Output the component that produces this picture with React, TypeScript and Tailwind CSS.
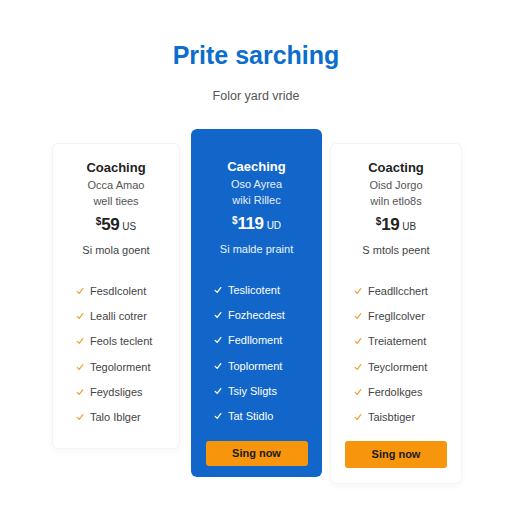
import React from "react";

type Plan = {
  name: string;
  lines: string[];
  price: string;
  unit: string;
  note: string;
  features: string[];
  featured?: boolean;
  button?: string;
};

const plans: Plan[] = [
  {
    name: "Coaching",
    lines: ["Occa Amao", "well tiees"],
    price: "59",
    unit: "US",
    note: "Si mola goent",
    features: ["Fesdlcolent", "Lealli cotrer", "Feols teclent", "Tegolorment", "Feydsliges", "Talo Iblger"],
  },
  {
    name: "Caeching",
    lines: ["Oso Ayrea", "wiki Rillec"],
    price: "119",
    unit: "UD",
    note: "Si malde praint",
    features: ["Teslicotent", "Fozhecdest", "Fedlloment", "Toplorment", "Tsiy Sligts", "Tat Stidlo"],
    featured: true,
    button: "mt-[17px] h-[25px]",
  },
  {
    name: "Coacting",
    lines: ["Oisd Jorgo", "wiln etlo8s"],
    price: "19",
    unit: "UB",
    note: "S mtols peent",
    features: ["Feadllcchert", "Fregllcolver", "Treiatement", "Teyclorment", "Ferdolkges", "Taisbtiger"],
    button: "mt-[16px] h-[27px]",
  },
];

const Check = ({ light }: { light?: boolean }) => (
  <svg width="8" height="8" viewBox="0 0 10 10" className="shrink-0">
    <path
      d="M1.5 5.5 L4 8 L8.5 2"
      fill="none"
      stroke={light ? "#ffffff" : "#f2a33a"}
      strokeWidth="1.6"
      strokeLinecap="round"
      strokeLinejoin="round"
    />
  </svg>
);

const PlanCard = ({ plan, box }: { plan: Plan; box: string }) => {
  const dark = plan.featured;
  return (
    <div
      className={`${box} flex flex-col rounded-[6px] ${
        dark
          ? "bg-[#1266c9] text-white"
          : "bg-white border border-[#f3f4f6] shadow-[0_2px_8px_rgba(0,0,0,0.035)] text-[#222]"
      }`}
    >
      <div className="text-center text-[13px] leading-[18px] font-bold">{plan.name}</div>
      {plan.lines.map((l) => (
        <div
          key={l}
          className={`text-center text-[11px] leading-[16px] ${dark ? "text-[#e6efff]" : "text-[#555]"}`}
        >
          {l}
        </div>
      ))}
      <div className="mt-[6px] flex items-baseline justify-center leading-[20px]">
        <span className="relative -top-[5px] text-[10px] font-bold">$</span>
        <span className="text-[17px] font-bold tracking-tight">{plan.price}</span>
        <span className={`ml-[3px] text-[10px] ${dark ? "text-white" : "text-[#333]"}`}>{plan.unit}</span>
      </div>
      <div className={`mt-[5px] text-center text-[11px] leading-[16px] ${dark ? "text-[#eef4ff]" : "text-[#444]"}`}>
        {plan.note}
      </div>
      <ul className="mt-[25px] flex flex-col gap-[9.2px] pl-[23px]">
        {plan.features.map((f) => (
          <li key={f} className="flex items-center gap-[6px] text-[11px] leading-[16px]">
            <Check light={dark} />
            <span className={dark ? "text-white" : "text-[#444]"}>{f}</span>
          </li>
        ))}
      </ul>
      {plan.button && (
        <button
          className={`mx-auto ${plan.button} w-[102px] rounded-[3px] bg-[#f7960c] text-[11px] font-bold text-[#1a1a1a]`}
        >
          Sing now
        </button>
      )}
    </div>
  );
};

export default function App() {
  return (
    <div
      className="min-h-[512px] w-[512px] bg-white"
      style={{ fontFamily: '"Liberation Sans", Arial, sans-serif' }}
    >
      <div className="pt-[39px] text-center">
        <h1 className="text-[25px] leading-[32px] font-bold text-[#0b6dcc]">Prite sarching</h1>
        <p className="mt-[16px] text-[12.5px] leading-[18px] text-[#555]">Folor yard vride</p>
      </div>
      <div className="mt-[24px] flex items-start pl-[52px]">
        <PlanCard plan={plans[0]} box="w-[128px] h-[306px] mt-[14px] pt-[15px]" />
        <PlanCard plan={plans[1]} box="ml-[11px] w-[131px] pt-[29px] pb-[11px]" />
        <PlanCard plan={plans[2]} box="ml-[8px] w-[132px] mt-[14px] pt-[15px] pb-[15px]" />
      </div>
    </div>
  );
}
